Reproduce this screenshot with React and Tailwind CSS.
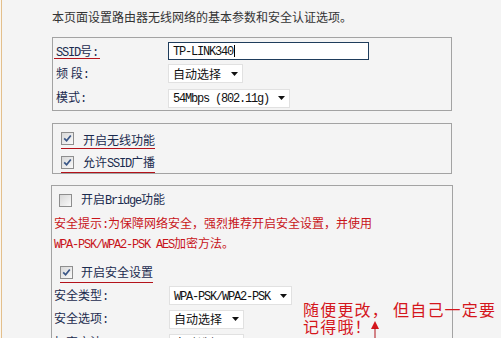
import React from "react";

const A = ({ children }) => (
  <span className="font-['Liberation_Mono',monospace] text-[12px] tracking-[-1.2px]">{children}</span>
);

function Caret() {
  return (
    <svg width="7" height="4" viewBox="0 0 7 4" className="shrink-0">
      <path d="M0 0H7L3.5 4Z" fill="#111" />
    </svg>
  );
}

function Select({ w, children }) {
  return (
    <div className={`flex items-center justify-between bg-white border border-[#e1e1e1] h-[19px] pl-[4px] pr-[4px] text-[#111] ${w}`}>
      <span className="leading-[14px] whitespace-nowrap">{children}</span>
      <Caret />
    </div>
  );
}

function Check({ checked }) {
  return (
    <span className="w-[13px] h-[13px] border border-[#8e8e8e] bg-linear-to-br from-[#d8d8d8] to-[#fafafa] flex items-center justify-center shrink-0">
      {checked && (
        <svg width="9" height="9" viewBox="0 0 9 9">
          <path d="M1.2 4.3L3.6 6.8L7.8 1.4" stroke="#3a5686" strokeWidth="1.7" fill="none" />
        </svg>
      )}
    </span>
  );
}

function Row({ label, labelW, h, children }) {
  return (
    <div className={`flex items-center ${h}`}>
      <div className={`${labelW} shrink-0 leading-[14px] text-[#1b2b4f] whitespace-nowrap`}>{label}</div>
      {children}
    </div>
  );
}

export default function App() {
  return (
    <div className="w-[501px] h-[338px] overflow-hidden bg-[#f4f4f4] flex font-['Noto_Sans_CJK_SC',sans-serif] text-[12px] relative">
      <div className="w-[1px] bg-[#fbf6ee] shrink-0" />
      <div className="w-[1px] bg-[#e3bf8c] shrink-0" />
      <div className="w-[1px] shrink-0" />
      <div className="pl-[49px] pt-[10px] flex flex-col">
        <p className="leading-[14px] h-[14px] text-[#333] whitespace-nowrap">本页面设置路由器无线网络的基本参数和安全认证选项。</p>

        {/* Box 1 */}
        <div className="mt-[13px] w-[400px] h-[76px] border border-[#a3a3a3] pt-[3px] pl-[3px] flex flex-col">
          <div className="flex items-center h-[20px]">
            <div className="w-[112px] shrink-0 h-[14px] leading-[14px] text-[#1b2b4f]">
              <span className="relative">
                <A>SSID</A>号<A>:</A>
                <span className="absolute left-[-2px] right-[-2px] top-[16px] h-px bg-[#b3121a]" />
              </span>
            </div>
            <div className="w-[201px] h-[18px] bg-white border border-[#1f3d5c] flex items-center pl-[4px] text-[#111]">
              <span className="leading-[14px]"><A>TP-LINK340</A></span>
              <span className="w-px h-[12px] bg-black ml-[1px]" />
            </div>
          </div>
          <Row label={<>频 段<A>:</A></>} labelW="w-[112px]" h="h-[25px]">
            <Select w="w-[75px]">自动选择</Select>
          </Row>
          <Row label={<>模式<A>:</A></>} labelW="w-[112px]" h="h-[24px]">
            <Select w="w-[122px]"><A>54Mbps (802.11g)</A></Select>
          </Row>
        </div>

        {/* Box 2 */}
        <div className="mt-[12px] w-[400px] h-[53px] border border-[#a3a3a3] pt-[1px] pl-[8px] flex flex-col items-start">
          <div className="h-[24px] pt-[4px] flex items-center gap-[9px] border-b border-[#b3121a]">
            <Check checked />
            <span className="leading-[14px] text-[#1b2b4f] pt-[2px]">开启无线功能</span>
          </div>
          <div className="h-[24px] pt-[4px] flex items-center gap-[9px] border-b border-[#b3121a]">
            <Check checked />
            <span className="leading-[14px] text-[#1b2b4f] pt-[1px]">允许<A>SSID</A>广播</span>
          </div>
        </div>

        {/* Box 3 */}
        <div className="mt-[11px] -ml-px w-[402px] h-[200px] border border-[#a3a3a3] pt-[2px] pl-[2px] flex flex-col items-start">
          <div className="h-[24px] pl-[5px] flex items-center gap-[9px]">
            <Check />
            <span className="leading-[14px] text-[#1b2b4f]">开启<A>Bridge</A>功能</span>
          </div>
          <div className="mt-[2px] leading-[18px] text-[#c8141a] whitespace-nowrap">
            <div>安全提示<A>:</A>为保障网络安全，强烈推荐开启安全设置，并使用</div>
            <div><A>WPA-PSK/WPA2-PSK AES</A>加密方法。</div>
          </div>
          <div className="mt-[8px] ml-[6px] h-[21px] flex items-center gap-[8px] border-b border-[#b3121a]">
            <Check checked />
            <span className="leading-[14px] text-[#1b2b4f]">开启安全设置</span>
          </div>
          <div className="mt-[1px]">
            <Row label={<>安全类型<A>:</A></>} labelW="w-[115px]" h="h-[23px]">
              <Select w="w-[123px]"><A>WPA-PSK/WPA2-PSK</A></Select>
            </Row>
            <Row label={<>安全选项<A>:</A></>} labelW="w-[115px]" h="h-[24px]">
              <Select w="w-[75px]">自动选择</Select>
            </Row>
            <Row label={<>加密方法<A>:</A></>} labelW="w-[115px]" h="h-[24px]">
              <Select w="w-[75px]">自动选择</Select>
            </Row>
          </div>
        </div>
      </div>

      {/* Annotation overlay */}
      <div className="absolute left-[303px] top-[301px] text-[16px] leading-[17px] tracking-[1.2px] text-[#d4161c] whitespace-nowrap">
        <div>随便更改，<span className="inline-block w-[4px]" />但自己一定要</div>
        <div>记得哦！</div>
      </div>
      <svg className="absolute left-[369px] top-[320px]" width="12" height="18" viewBox="0 0 12 18">
        <path d="M6 1L10 9H2Z" fill="#d4161c" />
        <path d="M6 8V18" stroke="#b01018" strokeWidth="1" />
      </svg>
    </div>
  );
}
